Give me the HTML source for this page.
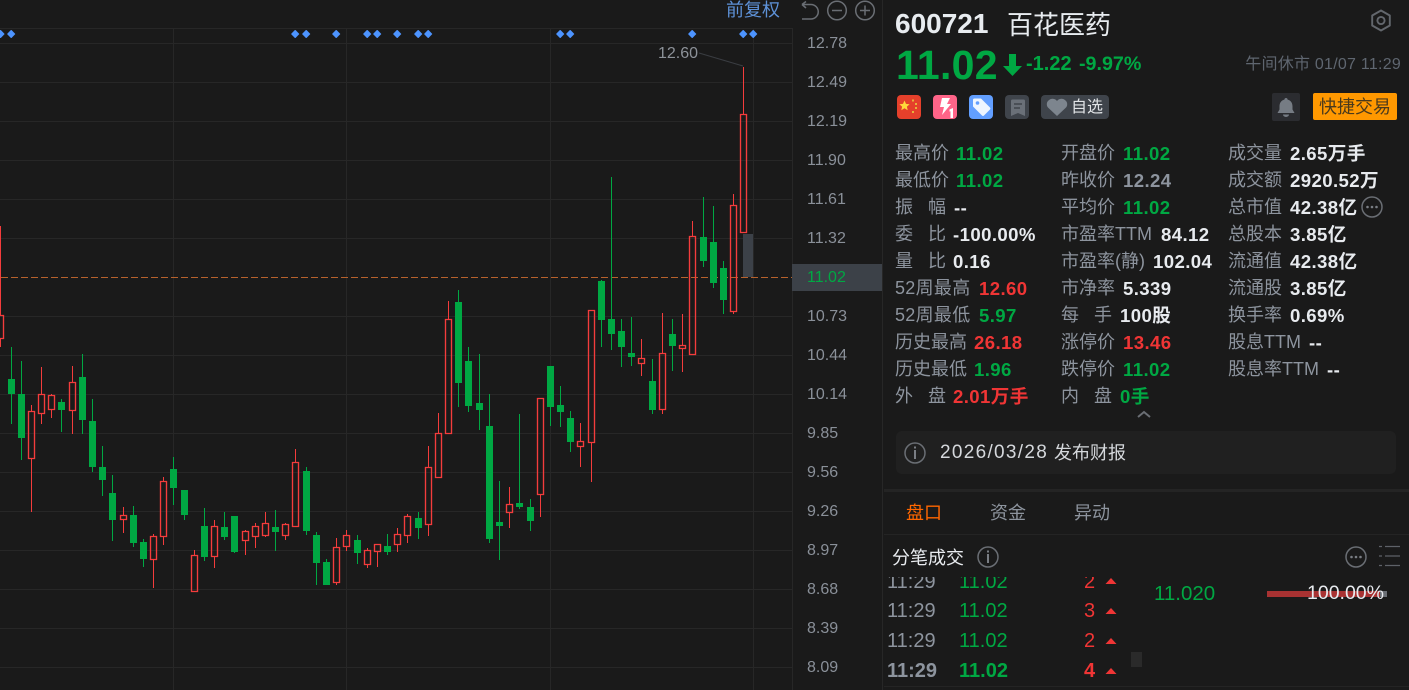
<!DOCTYPE html>
<html lang="zh"><head><meta charset="utf-8"><title>600721 百花医药</title>
<style>
html,body{margin:0;padding:0;background:#1a1a1a;width:1409px;height:690px;overflow:hidden}
body{position:relative;font-family:"Liberation Sans","Noto Sans CJK SC",sans-serif;color:#8d949e}
.a{position:absolute;white-space:nowrap}
.r{position:absolute;white-space:nowrap;line-height:27px;height:27px;font-size:18px;color:#8d949e;margin-top:1px}
.v{position:absolute;white-space:nowrap;line-height:27px;height:27px;font-size:18.6px;font-weight:bold;color:#e8ebef;margin-top:1px;letter-spacing:.4px}
.g{color:#00a843}.d{color:#f03535}.n{color:#8d949e}
.y{position:absolute;left:807px;font-size:16px;line-height:20px;color:#8a9099;margin-top:1px}
svg{position:absolute;left:0;top:0}
</style></head><body>
<svg width="1409" height="690" viewBox="0 0 1409 690">
<g stroke="#272727" stroke-width="1" shape-rendering="crispEdges">
<path d="M0 28.5H792M0 43.5H792M0 82.5H792M0 121.5H792M0 160.5H792M0 199.5H792M0 238.5H792M0 316.5H792M0 355.5H792M0 394.5H792M0 433.5H792M0 472.5H792M0 511.5H792M0 550.5H792M0 589.5H792M0 628.5H792M0 667.5H792"/>
<path d="M173.5 28V690M346.5 28V690M550.5 28V690M753.5 28V690M792.5 28V690M882.5 0V690"/>
</g>
<path d="M1 277.5H792" stroke="#b8622c" stroke-width="1" stroke-dasharray="7 3" shape-rendering="crispEdges"/>
<rect x="743" y="234" width="10" height="43" fill="#3c4148"/>
<g fill="#4d94ff" stroke="#4d94ff" stroke-width="1.2" stroke-linejoin="round">
<path d="M0.5 30.600l3.400 3.400-3.400 3.400-3.400-3.400zM11.200 30.600l3.400 3.400-3.400 3.400-3.400-3.400zM295.200 30.600l3.400 3.400-3.400 3.400-3.400-3.400zM306.200 30.600l3.400 3.400-3.400 3.400-3.400-3.400zM336.200 30.600l3.400 3.400-3.400 3.400-3.400-3.400zM367.200 30.600l3.400 3.400-3.400 3.400-3.400-3.400zM377.200 30.600l3.400 3.400-3.400 3.400-3.400-3.400zM397.200 30.600l3.400 3.400-3.400 3.400-3.400-3.400zM418.200 30.600l3.400 3.400-3.400 3.400-3.400-3.400zM428.200 30.600l3.400 3.400-3.400 3.400-3.400-3.400zM560.200 30.600l3.400 3.400-3.400 3.400-3.400-3.400zM570.200 30.600l3.400 3.400-3.400 3.400-3.400-3.400zM692.200 30.600l3.400 3.400-3.400 3.400-3.400-3.400zM743.200 30.600l3.400 3.400-3.400 3.400-3.400-3.400zM753.200 30.600l3.400 3.400-3.400 3.400-3.400-3.400z"/>
</g>
<path d="M699 53L743 66" stroke="#3a3d42" stroke-width="1" fill="none"/>
<g>
<path shape-rendering="crispEdges" fill="none" stroke="#00a843" d="M11.500 347V424M21.500 361V460M61.500 399V432M82.500 354V434M92.500 399V472M102.500 446V496M112.500 475V541M133.500 506V547M143.500 539V567M173.500 457V505M184.500 490V520M204.500 508V561M224.500 512V540M234.500 516V553M275.500 510V551M306.500 467V535M316.500 532V585M326.500 559V585M357.500 535V564M387.500 534V555M418.500 512V539M458.500 290V407M468.500 347V412M479.500 354V430M489.500 394V543M499.500 481V560M519.500 414V509M530.500 499V531M550.500 366V426M560.500 386V427M570.500 411V452M601.500 280V347M611.500 177V350M621.500 319V367M631.500 317V366M652.500 359V414M672.500 319V371M703.500 197V267M713.500 206V288M723.500 261V314"/>
<path shape-rendering="crispEdges" fill="#00a843" d="M8 379h7v15h-7zM18 394h7v44h-7zM58 402h7v8h-7zM79 377h7v43h-7zM89 421h7v46h-7zM99 467h7v13h-7zM109 493h7v27h-7zM130 515h7v28h-7zM140 542h7v17h-7zM170 469h7v19h-7zM181 490h7v25h-7zM201 526h7v31h-7zM221 527h7v10h-7zM231 516h7v36h-7zM272 527h7v5h-7zM303 471h7v60h-7zM313 535h7v28h-7zM323 562h7v23h-7zM354 540h7v13h-7zM384 546h7v6h-7zM415 518h7v10h-7zM455 302h7v81h-7zM465 361h7v45h-7zM476 403h7v7h-7zM486 426h7v113h-7zM496 522h7v4h-7zM516 503h7v4h-7zM527 507h7v14h-7zM547 366h7v41h-7zM557 405h7v7h-7zM567 418h7v24h-7zM598 281h7v39h-7zM608 319h7v15h-7zM618 331h7v16h-7zM628 353h7v4h-7zM649 381h7v29h-7zM669 334h7v12h-7zM700 237h7v24h-7zM710 242h7v41h-7zM720 268h7v32h-7z"/>
<path shape-rendering="crispEdges" fill="none" stroke="#f43c3c" d="M0.500 226V315M0.500 338V347M31.500 405V411M31.500 459V512M41.500 367V394M41.500 414V424M51.500 394V395M51.500 410V418M72.500 366V382M72.500 411V434M123.500 507V515M123.500 520V533M153.500 534V536M153.500 560V588M163.500 477V481M163.500 537V545M194.500 550V555M214.500 520V526M214.500 557V568M245.500 530V531M245.500 541V555M255.500 523V526M255.500 537V548M265.500 512V523M265.500 536V537M285.500 523V524M285.500 536V540M295.500 449V462M336.500 538V547M336.500 583V585M346.500 530V535M346.500 547V551M367.500 548V550M367.500 565V568M377.500 552V567M397.500 528V534M397.500 545V552M407.500 514V516M407.500 536V543M428.500 446V467M428.500 525V536M438.500 413V433M448.500 301V319M509.500 487V504M509.500 513V528M540.500 495V517M580.500 423V441M580.500 447V467M591.500 443V482M641.500 339V358M641.500 364V376M662.500 313V353M662.500 410V414M682.500 314V345M682.500 349V372M692.500 221V236M733.500 194V205M733.500 312V314M743.500 67V114"/>
<path fill="none" stroke="#f43c3c" stroke-width="1.350" d="M-2.500 315.500h6v23h-6zM28.500 411.500h6v47h-6zM38.500 394.500h6v19h-6zM48.500 395.500h6v14h-6zM69.500 382.500h6v28h-6zM120.500 515.500h6v4h-6zM150.500 536.500h6v23h-6zM160.500 481.500h6v55h-6zM191.500 555.500h6v36h-6zM211.500 526.500h6v30h-6zM242.500 531.500h6v9h-6zM252.500 526.500h6v10h-6zM262.500 523.500h6v12h-6zM282.500 524.500h6v11h-6zM292.500 462.500h6v64h-6zM333.500 547.500h6v35h-6zM343.500 535.500h6v11h-6zM364.500 550.500h6v14h-6zM374.500 544.500h6v7h-6zM394.500 534.500h6v10h-6zM404.500 516.500h6v19h-6zM425.500 467.500h6v57h-6zM435.500 433.500h6v44h-6zM445.500 319.500h6v114h-6zM506.500 504.500h6v8h-6zM537.500 398.500h6v96h-6zM577.500 441.500h6v5h-6zM588.500 310.500h6v132h-6zM638.500 358.500h6v5h-6zM659.500 353.500h6v56h-6zM679.500 345.500h6v3h-6zM689.500 236.500h6v118h-6zM730.500 205.500h6v106h-6zM740.500 114.500h6v118h-6z"/>
</g>
<rect x="792" y="264" width="90" height="27" fill="#3c4148"/>
<rect x="884" y="489" width="525" height="3" fill="#242424"/>
<rect x="884" y="534" width="525" height="1" fill="#242424"/>
<rect x="884" y="686" width="525" height="1" fill="#242424"/>
<rect x="896" y="431" width="500" height="43" rx="6" fill="#202020"/>
<!-- toolbar icons -->
<g fill="none" stroke="#6a6e74" stroke-width="1.500">
<path d="M802 4.500l4-3M802 4.500l4 3.500M802 4.500H811a7 7 0 0 1 0 14.500H802"/>
<circle cx="837" cy="10.500" r="9.300"/><path d="M832 10.500h10"/>
<circle cx="865" cy="10.500" r="9.300"/><path d="M860 10.500h10M865 5.500v10"/>
</g>
<!-- arrow -->
<path d="M1009 54h7v12h6l-9.500 10-9.500-10h6z" fill="#00a843"/>
<!-- gear -->
<g fill="none" stroke="#63676d" stroke-width="1.900">
<path d="M1381 10.500l8.800 5v10l-8.800 5-8.800-5v-10z" stroke-linejoin="round"/>
<circle cx="1381" cy="20.500" r="3.600"/>
</g>
<!-- flag -->
<rect x="897" y="95" width="24" height="24" rx="4" fill="#e5402b"/>
<path d="M904.500 100.500l1.500 3.400 3.600.3-2.700 2.400.8 3.600-3.200-1.900-3.200 1.900.8-3.600-2.700-2.400 3.600-.3z" fill="#ffd83a"/>
<path d="M912 99.500h2v2h-2zM915 103h2v2h-2zM915 107h2v2h-2zM912 111h2v2h-2z" fill="#e8b33a"/>
<!-- pink -->
<rect x="933" y="95" width="24" height="24" rx="4" fill="#ff6488"/>
<path d="M942 98h8l-3 6h4l-9 11 2-8h-4z" fill="#fff"/>
<path d="M949.500 109.500l3.500-1.500V118h-2.500v-6.800l-1 .4z" fill="#fff"/>
<!-- blue -->
<rect x="969" y="95" width="24" height="24" rx="4" fill="#629fff"/>
<path d="M973 100a1.500 1.500 0 0 1 1.500-1.500h6.500l9 9a1.500 1.500 0 0 1 0 2l-6 6a1.500 1.500 0 0 1-2 0l-9-9z" fill="#eef6ff"/>
<circle cx="977.500" cy="103" r="1.800" fill="#629fff"/>
<!-- bookmark -->
<rect x="1005" y="95" width="24" height="24" rx="4" fill="#3f444b"/>
<path d="M1011 101a1.500 1.500 0 0 1 1.500-1.500h11a1.500 1.500 0 0 1 1.500 1.500v15l-7-3-7 3z" fill="#6a7078"/>
<path d="M1014 104h8M1014 108h6" stroke="#3f444b" stroke-width="1.600"/>
<!-- fav -->
<rect x="1041" y="95" width="68" height="24" rx="4" fill="#3f444b"/>
<path d="M1057 116l-8.500-8a5 5 0 0 1 0-7.500 5.500 5.500 0 0 1 8.500.5 5.500 5.500 0 0 1 8.500-.5 5 5 0 0 1 0 7.500z" fill="#7d858e"/>
<!-- bell -->
<rect x="1272" y="93" width="28" height="28" rx="2" fill="#2b2c30"/>
<path d="M1286 98a1.500 1.500 0 0 1 1.500 1.500c3.500 1 5 3.500 5 7v3l2 3.500h-17l2-3.500v-3c0-3.500 1.500-6 5-7a1.500 1.500 0 0 1 1.500-1.500zM1283 114.500h6a3 2.500 0 0 1-6 0z" fill="#767c84"/>
<rect x="1313" y="93" width="84" height="27" rx="2" fill="#ff9800"/>
<!-- more dots -->
<g fill="none" stroke="#6a6e74" stroke-width="1.500">
<circle cx="1372" cy="207" r="10"/>
<circle cx="1356" cy="557" r="10"/>
<circle cx="988" cy="557" r="10"/>
<circle cx="915" cy="453" r="10"/>
<path d="M1138 417l6-5 6 5" stroke-width="2"/>
</g>
<g fill="#7a7e84">
<circle cx="1367.500" cy="207" r="1.300"/><circle cx="1372" cy="207" r="1.300"/><circle cx="1376.500" cy="207" r="1.300"/>
<circle cx="1351.500" cy="557" r="1.300"/><circle cx="1356" cy="557" r="1.300"/><circle cx="1360.500" cy="557" r="1.300"/>
<rect x="987" y="550.500" width="2" height="2"/><rect x="987" y="554" width="2" height="9"/>
<rect x="914" y="446.500" width="2" height="2"/><rect x="914" y="450" width="2" height="9"/>
</g>
<path d="M1379 546.500h3M1385 546.500h15M1379 556h3M1385 556h15M1379 565.500h3M1385 565.500h15" stroke="#5e6268" stroke-width="1.200"/>
<!-- trades -->
<rect x="1131" y="652" width="11" height="15" fill="#2a2a2a"/>
<rect x="1267" y="591" width="113" height="6" fill="#a83232"/>
<rect x="1380" y="591" width="7" height="6" fill="#6a6e74"/>
<path d="M1105.500 584l5.500-6 5.500 6zM1105.500 614l5.500-6 5.500 6zM1105.500 644l5.500-6 5.500 6zM1105.500 674l5.500-6 5.500 6z" fill="#f03535"/>
</svg>

<div class="a" style="left:726px;top:0;font-size:18px;line-height:21px;color:#5e92d8">前复权</div>
<div class="a" style="left:658px;top:44px;font-size:16px;line-height:20px;color:#8d9299">12.60</div>
<div class="y" style="top:33px">12.78</div><div class="y" style="top:72px">12.49</div><div class="y" style="top:111px">12.19</div><div class="y" style="top:150px">11.90</div><div class="y" style="top:189px">11.61</div><div class="y" style="top:228px">11.32</div><div class="y" style="top:267px;color:#00a843">11.02</div><div class="y" style="top:306px">10.73</div><div class="y" style="top:345px">10.44</div><div class="y" style="top:384px">10.14</div><div class="y" style="top:423px">9.85</div><div class="y" style="top:462px">9.56</div><div class="y" style="top:501px">9.26</div><div class="y" style="top:540px">8.97</div><div class="y" style="top:579px">8.68</div><div class="y" style="top:618px">8.39</div><div class="y" style="top:657px">8.09</div>

<div class="a" style="left:895px;top:8px;font-size:28px;line-height:32px;font-weight:bold;color:#e8ecf0">600721</div>
<div class="a" style="left:1007px;top:9px;font-size:26px;line-height:32px;color:#e8ecf0">百花医药</div>
<div class="a g" style="left:896px;top:41px;font-size:41px;line-height:48px;font-weight:bold;letter-spacing:.3px">11.02</div>
<div class="a g" style="left:1026px;top:52px;font-size:20px;line-height:24px;font-weight:bold">-1.22</div>
<div class="a g" style="left:1079px;top:52px;font-size:19.700px;line-height:24px;font-weight:bold">-9.97%</div>
<div class="a" style="right:8px;top:55px;font-size:16px;line-height:20px;color:#5f6670;letter-spacing:.25px">午间休市 01/07 11:29</div>
<div class="a" style="left:1071px;top:97px;font-size:16px;line-height:22px;color:#e0e3e6">自选</div>
<div class="a" style="left:1319px;top:96px;font-size:18px;line-height:23px;color:#4a3a1c">快捷交易</div>

<div class="r" style="left:895px;top:139px">最高价</div><div class="v g" style="left:956px;top:139px">11.02</div>
<div class="r" style="left:895px;top:166px">最低价</div><div class="v g" style="left:956px;top:166px">11.02</div>
<div class="r" style="left:895px;top:193px">振</div><div class="r" style="left:928px;top:193px">幅</div><div class="v" style="left:954px;top:193px">--</div>
<div class="r" style="left:895px;top:220px">委</div><div class="r" style="left:928px;top:220px">比</div><div class="v" style="left:953px;top:220px">-100.00%</div>
<div class="r" style="left:895px;top:247px">量</div><div class="r" style="left:928px;top:247px">比</div><div class="v" style="left:953px;top:247px">0.16</div>
<div class="r" style="left:895px;top:274px;letter-spacing:.3px">52周最高</div><div class="v d" style="left:979px;top:274px">12.60</div>
<div class="r" style="left:895px;top:301px;letter-spacing:.3px">52周最低</div><div class="v g" style="left:979px;top:301px">5.97</div>
<div class="r" style="left:895px;top:328px">历史最高</div><div class="v d" style="left:974px;top:328px">26.18</div>
<div class="r" style="left:895px;top:355px">历史最低</div><div class="v g" style="left:974px;top:355px">1.96</div>
<div class="r" style="left:895px;top:382px">外</div><div class="r" style="left:928px;top:382px">盘</div><div class="v d" style="left:953px;top:382px">2.01万手</div>

<div class="r" style="left:1061px;top:139px">开盘价</div><div class="v g" style="left:1123px;top:139px">11.02</div>
<div class="r" style="left:1061px;top:166px">昨收价</div><div class="v n" style="left:1123px;top:166px">12.24</div>
<div class="r" style="left:1061px;top:193px">平均价</div><div class="v g" style="left:1123px;top:193px">11.02</div>
<div class="r" style="left:1061px;top:220px">市盈率TTM</div><div class="v" style="left:1161px;top:220px">84.12</div>
<div class="r" style="left:1061px;top:247px">市盈率(静)</div><div class="v" style="left:1153px;top:247px">102.04</div>
<div class="r" style="left:1061px;top:274px">市净率</div><div class="v" style="left:1123px;top:274px">5.339</div>
<div class="r" style="left:1061px;top:301px">每</div><div class="r" style="left:1094px;top:301px">手</div><div class="v" style="left:1120px;top:301px">100股</div>
<div class="r" style="left:1061px;top:328px">涨停价</div><div class="v d" style="left:1123px;top:328px">13.46</div>
<div class="r" style="left:1061px;top:355px">跌停价</div><div class="v g" style="left:1123px;top:355px">11.02</div>
<div class="r" style="left:1061px;top:382px">内</div><div class="r" style="left:1094px;top:382px">盘</div><div class="v g" style="left:1120px;top:382px">0手</div>

<div class="r" style="left:1228px;top:139px">成交量</div><div class="v" style="left:1290px;top:139px">2.65万手</div>
<div class="r" style="left:1228px;top:166px">成交额</div><div class="v" style="left:1290px;top:166px">2920.52万</div>
<div class="r" style="left:1228px;top:193px">总市值</div><div class="v" style="left:1290px;top:193px">42.38亿</div>
<div class="r" style="left:1228px;top:220px">总股本</div><div class="v" style="left:1290px;top:220px">3.85亿</div>
<div class="r" style="left:1228px;top:247px">流通值</div><div class="v" style="left:1290px;top:247px">42.38亿</div>
<div class="r" style="left:1228px;top:274px">流通股</div><div class="v" style="left:1290px;top:274px">3.85亿</div>
<div class="r" style="left:1228px;top:301px">换手率</div><div class="v" style="left:1290px;top:301px">0.69%</div>
<div class="r" style="left:1228px;top:328px">股息TTM</div><div class="v" style="left:1309px;top:328px">--</div>
<div class="r" style="left:1228px;top:355px">股息率TTM</div><div class="v" style="left:1327px;top:355px">--</div>

<div class="a" style="left:940px;top:441px;font-size:19px;line-height:24px;letter-spacing:1.300px;color:#d5d8dc">2026/03/28</div>
<div class="a" style="left:1054px;top:441px;font-size:18px;line-height:24px;color:#d5d8dc">发布财报</div>

<div class="a" style="left:906px;top:502px;font-size:18px;line-height:23px;color:#ff6600">盘口</div>
<div class="a" style="left:990px;top:502px;font-size:18px;line-height:23px;color:#8d949e">资金</div>
<div class="a" style="left:1074px;top:502px;font-size:18px;line-height:23px;color:#8d949e">异动</div>
<div class="a" style="left:892px;top:547px;font-size:18px;line-height:23px;color:#e8ebef">分笔成交</div>

<div class="a" style="left:884px;top:577px;width:230px;height:109px;overflow:hidden">
<div class="a" style="left:3px;top:-6px;font-size:20px;line-height:23px;color:#8d949e">11:29</div><div class="a g" style="left:75px;top:-6px;font-size:20px;line-height:23px">11.02</div><div class="a d" style="left:200px;top:-6px;font-size:20px;line-height:23px">2</div>
<div class="a" style="left:3px;top:23px;font-size:20px;line-height:23px;color:#8d949e">11:29</div><div class="a g" style="left:75px;top:23px;font-size:20px;line-height:23px">11.02</div><div class="a d" style="left:200px;top:23px;font-size:20px;line-height:23px">3</div>
<div class="a" style="left:3px;top:53px;font-size:20px;line-height:23px;color:#8d949e">11:29</div><div class="a g" style="left:75px;top:53px;font-size:20px;line-height:23px">11.02</div><div class="a d" style="left:200px;top:53px;font-size:20px;line-height:23px">2</div>
<div class="a" style="left:3px;top:83px;font-size:20px;line-height:23px;font-weight:bold;color:#8d949e">11:29</div><div class="a g" style="left:75px;top:83px;font-size:20px;line-height:23px;font-weight:bold">11.02</div><div class="a d" style="left:200px;top:83px;font-size:20px;line-height:23px;font-weight:bold">4</div>
</div>
<div class="a g" style="left:1154px;top:582px;font-size:20.500px;line-height:23px">11.020</div>
<div class="a" style="left:1307px;top:582px;font-size:19.500px;line-height:23px;color:#e8ebef">100.00%</div>
</body></html>
